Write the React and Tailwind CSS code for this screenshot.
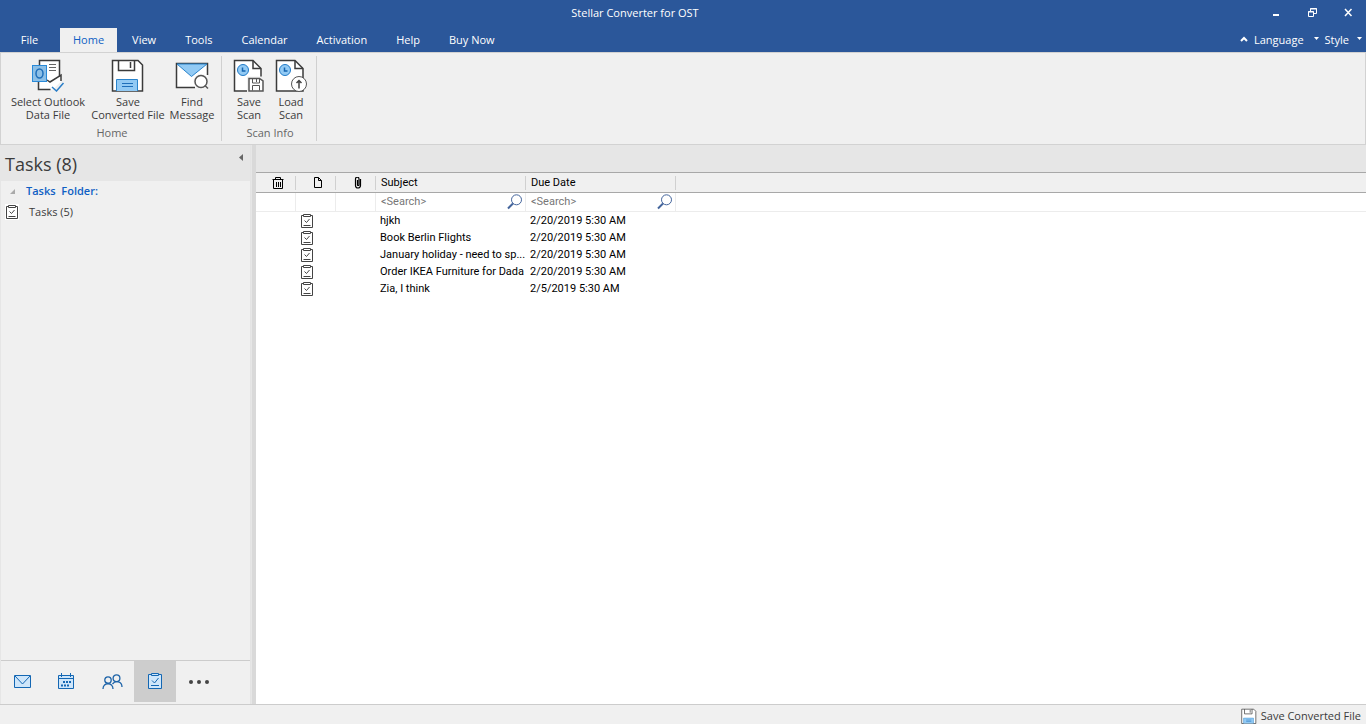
import { useState } from "react"

const TABS = ["Home", "View", "Tools", "Calendar", "Activation", "Help", "Buy Now"]

const TASKS = [
  { subject: "hjkh", due: "2/20/2019 5:30 AM" },
  { subject: "Book Berlin Flights", due: "2/20/2019 5:30 AM" },
  { subject: "January holiday - need to sp...", due: "2/20/2019 5:30 AM" },
  { subject: "Order IKEA Furniture for Dada", due: "2/20/2019 5:30 AM" },
  { subject: "Zia, I think", due: "2/5/2019 5:30 AM" },
]

/* ── Icons ── */

function OutlookFileIcon() {
  return (
    <svg width="34" height="34" viewBox="0 0 34 34" fill="none">
      <path d="M8.500 2.500h20v17l1.500-3v7l-8 8H8.500z" fill="#fff" />
      <path d="M8.500 7V2.500h20v16M7.500 24v7.500h12" stroke="#3b3b3b" strokeWidth="1.500" />
      <path d="M16 22l3 2 11-7v6" stroke="#3b3b3b" strokeWidth="1.500" />
      <path d="M18 6.500h7M18 9.500h7M18 12.500h7" stroke="#666" />
      <rect x="1.500" y="7.500" width="14" height="16" fill="#8cbfe6" stroke="#2a8ad8" />
      <ellipse cx="8.500" cy="15.500" rx="3.500" ry="4.500" stroke="#1f6fba" strokeWidth="1.500" />
      <path d="M21 29l4.500 4 7-8" stroke="#2a7ec8" strokeWidth="1.500" />
    </svg>
  )
}

function FloppyIcon({ size = 34 }) {
  return (
    <svg width={size} height={size} viewBox="0 0 34 34" fill="none">
      <path d="M1.500 2.500H27l4.500 4.500v26h-30z" fill="#fff" stroke="#3b3b3b" strokeWidth="1.500" />
      <path d="M7.500 2.500v10h16v-10M19.500 4v6" stroke="#3b3b3b" strokeWidth="1.500" />
      <path d="M5.500 33V21.500h21V33" fill="#92caf4" stroke="#2a84cc" />
      <path d="M11 25.500h11M11 28.500h11" stroke="#1f6fba" />
    </svg>
  )
}

function FindMessageIcon() {
  return (
    <svg width="34" height="34" viewBox="0 0 34 34" fill="none">
      <path d="M1.500 5.500h31v24h-31z" fill="#fff" />
      <path d="M20 29.500H1.500v-24h31V17" stroke="#3b3b3b" strokeWidth="1.500" />
      <path d="M2 6h30L16.500 18.500z" fill="#92caf4" stroke="#2a84cc" />
      <circle cx="26" cy="23.500" r="7.500" fill="#f0f0f0" />
      <circle cx="26" cy="23.500" r="6" fill="#fff" stroke="#555" strokeWidth="1.500" />
      <path d="M30 27.500l3 3" stroke="#555" strokeWidth="1.500" />
    </svg>
  )
}

function ScanPage() {
  return (
    <>
      <path d="M2.500 2.500H21l8 8v22.500h-26.500z" fill="#fff" stroke="#3b3b3b" strokeWidth="1.500" />
      <path d="M21 3v7.500h8" stroke="#3b3b3b" strokeWidth="1.500" />
      <circle cx="11" cy="12" r="5.500" fill="#92caf4" stroke="#1f7ac8" />
      <path d="M10.500 9.500v3.500h3" stroke="#1565b0" strokeWidth="1.500" />
    </>
  )
}

function SaveScanIcon() {
  return (
    <svg width="34" height="34" viewBox="0 0 34 34" fill="none">
      <ScanPage />
      <path d="M15 18.500h17.500V34H15z" fill="#f0f0f0" />
      <path d="M17 20.500h10.500l3.500 2.500v10H17z" fill="#fff" stroke="#555" strokeWidth="1.500" />
      <path d="M20.500 21v4h7v-4M24.500 21v3M20.500 32.500v-5h7v5" stroke="#555" />
    </svg>
  )
}

function LoadScanIcon() {
  return (
    <svg width="34" height="34" viewBox="0 0 34 34" fill="none">
      <ScanPage />
      <circle cx="25" cy="26" r="7.500" fill="#fff" stroke="#555" />
      <path d="M25 30.500v-8M22.500 25l2.500-2.500 2.500 2.500" stroke="#444" strokeWidth="1.500" />
    </svg>
  )
}

function TaskIcon({ className = "" }) {
  return (
    <svg width="14" height="16" viewBox="0 0 14 16" fill="none" className={className}>
      <path d="M3 2.500H1.500v12h11v-12H11" stroke="#444" />
      <path d="M3.500 1.500h7v2h-7z" fill="#fff" stroke="#444" />
      <path d="M4.500 7.500l2 2 3-3.500M3.500 12.500h7" stroke="#444" />
    </svg>
  )
}

function TrashIcon() {
  return (
    <svg width="12" height="12" viewBox="0 0 12 12" fill="none" stroke="#000">
      <path d="M0.500 2.500h11M3.500 2V0.500h5V2M1.500 3v8.500h9V3M4.500 5v5M6.500 5v5M8.500 5v5" />
    </svg>
  )
}

function PageIcon() {
  return (
    <svg width="10" height="12" viewBox="0 0 10 12" fill="none" stroke="#000">
      <path d="M1.500 0.500h4l3 3v7h-7zM5.500 0.500v3h3" />
    </svg>
  )
}

function ClipIcon() {
  return (
    <svg width="8" height="12" viewBox="0 0 8 12" fill="none" stroke="#000" strokeWidth="1.200">
      <path d="M3.500 3v5a.8.8 0 0 0 1.500 0V2a1.500 1.500 0 0 0-3.500 0V8.500a2.500 2.500 0 0 0 5 0V2" />
    </svg>
  )
}

function SearchIcon() {
  return (
    <svg width="16" height="16" viewBox="0 0 16 16" fill="none" stroke="#44659c">
      <circle cx="9.500" cy="5.800" r="5" />
      <path d="M6 9.500L1 14.500" strokeWidth="2" />
    </svg>
  )
}

function MailNavIcon() {
  return (
    <svg width="18" height="16" viewBox="0 0 18 16" fill="#cfe6fa" stroke="#1467b3">
      <path d="M0.500 1.500h16v12h-16z" />
      <path d="M1 2l7.500 8L16 2" />
    </svg>
  )
}

function CalendarNavIcon() {
  return (
    <svg width="16" height="17" viewBox="0 0 16 17" fill="none" stroke="#1467b3">
      <path d="M0.500 2.500h15v13h-15z" fill="#cfe6fa" />
      <path d="M0.500 5.500h15M3.500 0v4M12.500 0v4" />
      <path d="M5 9h8M3 12.500h8" strokeWidth="2" strokeDasharray="2 1" />
    </svg>
  )
}

function PeopleNavIcon() {
  return (
    <svg width="21" height="16" viewBox="0 0 21 16" fill="none" stroke="#1d63a8" strokeWidth="1.300">
      <circle cx="6" cy="6" r="3.200" />
      <path d="M1 15c0-7 10-7 10 0" />
      <circle cx="14.500" cy="4.200" r="3.400" />
      <path d="M10.500 10c3-4 9.500-2.500 9.500 3" />
    </svg>
  )
}

function TasksNavIcon() {
  return (
    <svg width="14" height="17" viewBox="0 0 14 17" fill="none" stroke="#1467b3">
      <path d="M0.500 1.500h13v14h-13z" fill="#cfe6fa" />
      <path d="M3.500 0.500h7v2h-7z" fill="#cfe6fa" />
      <path d="M4 7.500l2.500 2.500 4-5M3 12.500h8" />
    </svg>
  )
}

function DotsIcon() {
  return (
    <svg width="22" height="6" viewBox="0 0 22 6" fill="#444">
      <circle cx="3" cy="3" r="2" />
      <circle cx="11" cy="3" r="2" />
      <circle cx="19" cy="3" r="2" />
    </svg>
  )
}

function Caret() {
  return (
    <svg width="5" height="9" viewBox="0 0 5 9" fill="currentColor">
      <path d="M0 1h5L2.500 4z" />
    </svg>
  )
}

/* ── Layout parts ── */

function TitleBar() {
  return (
    <header className="flex h-[26px] items-center bg-[#2b579a] pr-2 text-white">
      <h1 className="flex-1 pl-1 text-center">Stellar Converter for OST</h1>
      <div className="flex gap-4">
        <button aria-label="Minimize" className="flex h-5 w-5 items-center justify-center">
          <svg width="10" height="10" viewBox="0 0 10 10" fill="currentColor">
            <path d="M2 6h6v2H2z" />
          </svg>
        </button>
        <button aria-label="Restore" className="flex h-5 w-5 items-center justify-center">
          <svg width="10" height="10" viewBox="0 0 10 10" fill="none" stroke="currentColor">
            <path d="M3.500 3V0.500h6v5H7M3 1h7M1 4h6M1.500 3.500v5h5v-5z" />
          </svg>
        </button>
        <button aria-label="Close" className="flex h-5 w-5 items-center justify-center">
          <svg width="10" height="10" viewBox="0 0 10 10" stroke="currentColor" strokeWidth="1.500">
            <path d="M2 1l6.500 7M8.500 1L2 8" />
          </svg>
        </button>
      </div>
    </header>
  )
}

function TabBar({ active, onSelect }) {
  return (
    <nav className="flex h-[26px] items-end gap-px bg-[#2b579a] text-white">
      <button className="h-6 w-[59px]">File</button>
      {TABS.map((tab) => (
        <button
          key={tab}
          onClick={() => onSelect(tab)}
          className={`h-6 ${tab === active ? "bg-[#f0f0f0] px-[13px] text-[#0f5fc4]" : "px-3.5"}`}
        >
          {tab}
        </button>
      ))}
      <div className="ml-auto flex h-6 items-center pr-1">
        <button aria-label="Collapse ribbon" className="mr-1.5">
          <svg width="8" height="8" viewBox="0 0 8 8" fill="none" stroke="currentColor" strokeWidth="2">
            <path d="M1 5l3-3 3 3" />
          </svg>
        </button>
        <button className="flex items-center gap-2.5">
          Language
          <Caret />
        </button>
        <button className="ml-1.5 flex items-center gap-2">
          Style
          <Caret />
        </button>
      </div>
    </nav>
  )
}

function RibbonButton({ icon, lines, className = "" }) {
  return (
    <button className={`flex flex-col items-center leading-[13px] ${className}`}>
      {icon}
      <span className="mt-[3px]">{lines[0]}</span>
      <span>{lines[1]}</span>
    </button>
  )
}

function RibbonGroup({ label, className = "", children }) {
  return (
    <section className={`my-[3px] flex flex-col items-center justify-between border-r border-[#d0d0d0] pt-0.5 pl-0.5 ${className}`}>
      <div className="flex whitespace-nowrap">{children}</div>
      <h2 className="leading-4 text-[#666]">{label}</h2>
    </section>
  )
}

function Ribbon() {
  return (
    <div className="flex h-[93px] border border-[#d2d2d2] bg-[#f0f0f0]">
      <RibbonGroup label="Home" className="w-[221px]">
        <RibbonButton icon={<OutlookFileIcon />} lines={["Select Outlook", "Data File"]} className="w-[82px]" />
        <RibbonButton icon={<FloppyIcon />} lines={["Save", "Converted File"]} className="w-[78px]" />
        <RibbonButton icon={<FindMessageIcon />} lines={["Find", "Message"]} className="w-[50px]" />
      </RibbonGroup>
      <RibbonGroup label="Scan Info" className="w-[95px]">
        <RibbonButton icon={<SaveScanIcon />} lines={["Save", "Scan"]} className="w-[42px]" />
        <RibbonButton icon={<LoadScanIcon />} lines={["Load", "Scan"]} className="w-[42px]" />
      </RibbonGroup>
    </div>
  )
}

function Sidebar() {
  const navButton = "flex h-[41px] w-[43px] items-center justify-center"
  return (
    <aside className="flex w-[251px] shrink-0 flex-col border-x border-r-[#e3e3e3] border-l-[#e6e6e6] bg-[#f0f0f0]">
      <div className="flex h-9 items-start justify-between bg-[#e6e6e6] pr-1.5 pl-1">
        <h2 className="pt-[7px] text-[18px] leading-6">Tasks (8)</h2>
        <button aria-label="Collapse panel" className="pt-2">
          <svg width="6" height="9" viewBox="0 0 6 9" fill="#666">
            <path d="M5 1v7L1 4.500z" />
          </svg>
        </button>
      </div>
      <div className="flex-1 pl-1">
        <button className="flex h-5 items-center font-semibold whitespace-pre text-[#0f5fc4]">
          <svg width="21" height="8" viewBox="0 0 21 8" fill="#aaa">
            <path d="M10 2v5H5z" />
          </svg>
          Tasks  Folder:
        </button>
        <button className="flex h-[22px] items-center gap-2.5">
          <TaskIcon className="bg-white" />
          Tasks (5)
        </button>
      </div>
      <nav className="flex h-11 border-t border-[#cccccc]">
        <button aria-label="Mail" className={navButton}><MailNavIcon /></button>
        <button aria-label="Calendar" className={navButton}><CalendarNavIcon /></button>
        <button aria-label="People" className="flex h-[41px] w-[47px] items-center justify-center pl-1"><PeopleNavIcon /></button>
        <button aria-label="Tasks" className="flex h-[41px] w-[42px] items-center justify-center bg-[#cdcdcd]"><TasksNavIcon /></button>
        <button aria-label="More" className="flex h-[41px] w-[46px] items-center justify-center"><DotsIcon /></button>
      </nav>
    </aside>
  )
}

function HeaderCell({ label, icon }) {
  return (
    <th scope="col" aria-label={label} className="p-0 font-normal">
      <div className="flex h-3.5 items-center border-r border-[#d0d0d0]">
        {icon ? <span className="flex-1 pl-1 [&>svg]:mx-auto">{icon}</span> : <span className="pl-[5px]">{label}</span>}
      </div>
    </th>
  )
}

function SearchCell({ label }) {
  const [query, setQuery] = useState("")
  return (
    <td className="border-r border-b border-[#ececec] p-0">
      <div className="flex items-center pr-0.5 pl-[5px]">
        <input
          aria-label={label}
          placeholder="<Search>"
          value={query}
          onChange={(e) => setQuery(e.target.value)}
          className="h-4 min-w-0 flex-1 outline-none placeholder:text-[#777]"
        />
        <SearchIcon />
      </div>
    </td>
  )
}

function TaskTable() {
  return (
    <main className="min-w-0 flex-1 bg-white">
      <div className="h-[27px] bg-[#e6e6e6]" />
      <table className="w-full table-fixed border-separate border-spacing-0 text-left font-[Roboto,'Liberation_Sans',sans-serif] text-[11px] leading-4 text-black">
        <colgroup>
          <col className="w-10" />
          <col className="w-10" />
          <col className="w-10" />
          <col className="w-[150px]" />
          <col className="w-[150px]" />
          <col />
        </colgroup>
        <thead>
          <tr className="h-[21px] bg-[#f0f0f0] [&>th]:border-y [&>th]:border-[#a8a8a8]">
            <HeaderCell label="Deleted" icon={<TrashIcon />} />
            <HeaderCell label="Type" icon={<PageIcon />} />
            <HeaderCell label="Attachment" icon={<ClipIcon />} />
            <HeaderCell label="Subject" />
            <HeaderCell label="Due Date" />
            <th />
          </tr>
        </thead>
        <tbody>
          <tr className="h-[19px]">
            <td className="border-r border-b border-[#ececec]" />
            <td className="border-r border-b border-[#ececec]" />
            <td className="border-r border-b border-[#ececec]" />
            <SearchCell label="Search subject" />
            <SearchCell label="Search due date" />
            <td className="border-b border-[#ececec]" />
          </tr>
          {TASKS.map((task) => (
            <tr key={task.subject} className="h-[17px]">
              <td />
              <td className="p-0 pt-px pl-1"><TaskIcon /></td>
              <td />
              <td className="p-0 pl-1 whitespace-nowrap">{task.subject}</td>
              <td className="p-0 pl-1">{task.due}</td>
              <td />
            </tr>
          ))}
        </tbody>
      </table>
    </main>
  )
}

function App() {
  const [activeTab, setActiveTab] = useState("Home")

  return (
    <div className="flex h-screen flex-col overflow-hidden bg-[#f0f0f0] font-['Open_Sans','Noto_Sans',sans-serif] text-[11px] leading-4 text-[#3b3b3b]">
      <TitleBar />
      <TabBar active={activeTab} onSelect={setActiveTab} />
      <Ribbon />
      <div className="flex min-h-0 flex-1">
        <Sidebar />
        <div className="w-[5px] shrink-0 border-r-4 border-[#d9d9d9] bg-[#e6e6e6]" />
        <TaskTable />
      </div>
      <footer className="flex h-5 items-start justify-end border-t border-[#cccccc] pt-[3px] pr-[5px]">
        <button className="flex items-center gap-1">
          <FloppyIcon size={16} />
          Save Converted File
        </button>
      </footer>
    </div>
  )
}

export default App
